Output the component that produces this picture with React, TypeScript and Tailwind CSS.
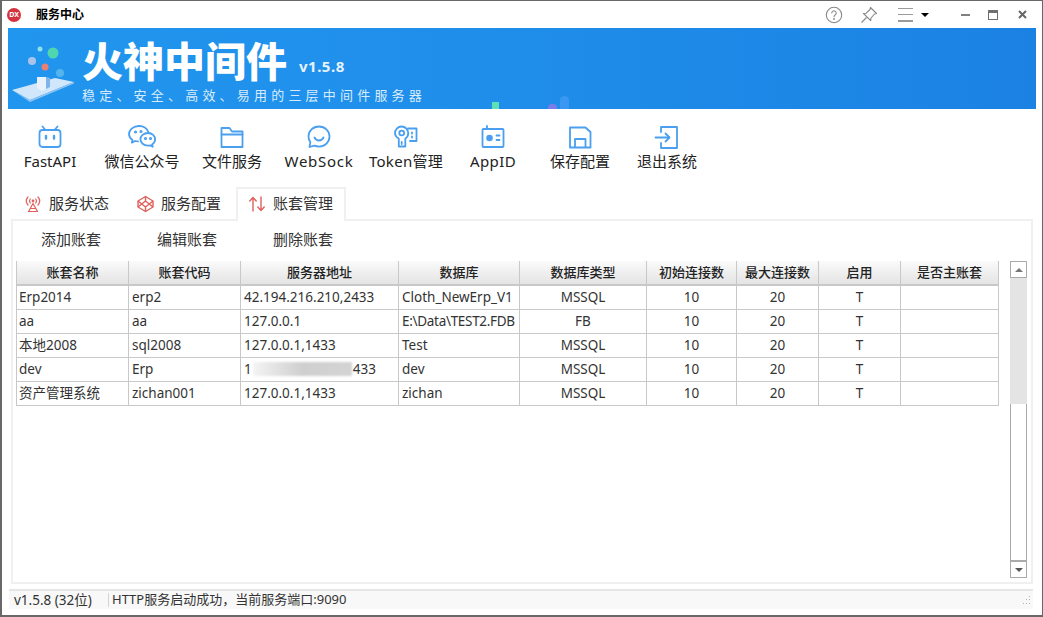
import type { ReactNode } from 'react';

const BLUE = '#4a9ff0';
const FONT = '"Noto Sans", "Noto Sans CJK SC", sans-serif';

function Ico({ children, w = 26, h = 26 }: { children: ReactNode; w?: number; h?: number }) {
  return (
    <svg width={w} height={h} viewBox={`0 0 ${w} ${h}`} fill="none" stroke={BLUE} strokeWidth="1.8" strokeLinejoin="round" strokeLinecap="round">
      {children}
    </svg>
  );
}

const toolbarItems: { label: string; cls: string; labelCls?: string; icon: ReactNode }[] = [
  {
    label: 'FastAPI',
    cls: 'w-[84px]',
    icon: (
      <Ico>
        <rect x="2.500" y="6" width="21" height="17" rx="3" />
        <path d="M8 5.500 5.500 2.500M18 5.500l2.500-3" />
        <path d="M9 12v2.500M17 12v2.500" strokeWidth="2.4" />
      </Ico>
    ),
  },
  {
    label: '微信公众号',
    cls: 'w-[100px]',
    icon: (
      <Ico w={30}>
        <path d="M12 2C6.500 2 2 5.600 2 10c0 2.500 1.400 4.500 3.500 6l-.7 2.700 3.200-1.700c1 .3 2 .4 3 .4" />
        <path d="M21.500 8.500C20.500 4.700 16.600 2 12 2" />
        <path d="M21 9c-4.300 0-7.600 2.800-7.600 6.300s3.300 6.300 7.600 6.300c.8 0 1.500-.1 2.200-.3l2.500 1.500-.6-2.400c1.800-1.200 3-3 3-5.100C28.100 11.800 25.200 9 21 9Z" />
        <circle cx="8.500" cy="8" r=".7" />
        <circle cx="14" cy="7.500" r=".7" />
        <circle cx="18.500" cy="14.500" r=".7" />
        <circle cx="23.500" cy="14.500" r=".7" />
      </Ico>
    ),
  },
  {
    label: '文件服务',
    cls: 'w-[80px]',
    icon: (
      <Ico>
        <path d="M2.500 4h8l2.500 3.500h10.500V23h-21Z" />
        <path d="M2.500 10.500h21" />
      </Ico>
    ),
  },
  {
    label: 'WebSock',
    cls: 'w-[94px]',
    labelCls: 'tracking-[0.7px]',
    icon: (
      <Ico>
        <path d="M13 2.500C7 2.500 2.500 7 2.500 12.500c0 2.200.7 4.100 1.900 5.700L3.500 23l5-1.300c1.400.6 2.900.9 4.500.9 5.800 0 10.500-4.500 10.500-10.100S18.800 2.500 13 2.500Z" />
        <path d="M8.500 13.500c1 2 2.700 3 4.500 3s3.500-1 4.500-3" />
      </Ico>
    ),
  },
  {
    label: 'Token管理',
    cls: 'w-[80px]',
    labelCls: 'tracking-[0.3px]',
    icon: (
      <Ico>
        <path d="M15 4.500h8.500V17H17" />
        <path d="M8.500 2.500a6.800 6.800 0 0 1 6.800 6.800c0 2.500-1.300 4.200-3 5.400V22.500H5.800v-7.800C3.800 13.500 2 11.800 2 9.300a6.500 6.500 0 0 1 6.500-6.800Z" />
        <circle cx="8.700" cy="9" r="2.400" />
        <path d="M8.700 18v2M19 8.500v1M19 12.500v1" />
      </Ico>
    ),
  },
  {
    label: 'AppID',
    cls: 'w-[94px]',
    labelCls: 'tracking-[0.4px]',
    icon: (
      <Ico>
        <rect x="2.500" y="5" width="21" height="18" rx="1" />
        <path d="M7 4.500V2" />
        <circle cx="9.500" cy="14" r="2.400" fill={BLUE} />
        <path d="M16.500 11.500h3M16.500 16h3" />
      </Ico>
    ),
  },
  {
    label: '保存配置',
    cls: 'w-[80px]',
    icon: (
      <Ico>
        <path d="M3 3.500h15.500L23.500 8v15.500H3Z" />
        <path d="M8 23v-8h10.500v8" />
      </Ico>
    ),
  },
  {
    label: '退出系统',
    cls: 'w-[94px]',
    icon: (
      <Ico>
        <path d="M7 8V3h16v21H7v-5" />
        <path d="M1.500 13.500H15" />
        <path d="m11.500 9.500 4 4-4 4" />
      </Ico>
    ),
  },
];

const columns = [
  { title: '账套名称', cls: 'w-[112px]', align: 'text-left' },
  { title: '账套代码', cls: 'w-[112px]', align: 'text-left' },
  { title: '服务器地址', cls: 'w-[158px]', align: 'text-left' },
  { title: '数据库', cls: 'w-[121px]', align: 'text-left' },
  { title: '数据库类型', cls: 'w-[127px]', align: 'text-center' },
  { title: '初始连接数', cls: 'w-[90px]', align: 'text-center' },
  { title: '最大连接数', cls: 'w-[82px]', align: 'text-center' },
  { title: '启用', cls: 'w-[82px]', align: 'text-center' },
  { title: '是否主账套', cls: 'w-[98px]', align: 'text-center' },
];

const rows: ReactNode[][] = [
  ['Erp2014', 'erp2', '42.194.216.210,2433', 'Cloth_NewErp_V1', 'MSSQL', '10', '20', 'T', ''],
  ['aa', 'aa', '127.0.0.1', <span className="tracking-[-0.3px]">E:\Data\TEST2.FDB</span>, 'FB', '10', '20', 'T', ''],
  ['本地2008', 'sql2008', '127.0.0.1,1433', 'Test', 'MSSQL', '10', '20', 'T', ''],
  [
    'dev',
    'Erp',
    <span className="flex items-center">
      1
      <span className="mx-px h-[14px] w-[99px] bg-gradient-to-r from-[#f4f4f4] via-[#cfcfcf] to-[#d4d4d4] blur-[1px]" />
      433
    </span>,
    'dev',
    'MSSQL',
    '10',
    '20',
    'T',
    '',
  ],
  ['资产管理系统', 'zichan001', '127.0.0.1,1433', 'zichan', 'MSSQL', '10', '20', 'T', ''],
];

function TabIcon({ name }: { name: string }) {
  if (name === 'status') {
    return (
      <svg width="16" height="18" viewBox="0 0 16 18" fill="none" stroke="#e0605c" strokeWidth="1.200" strokeLinecap="round" strokeLinejoin="round">
        <path d="M3 2C.8 4.500.8 7.500 3 10M13 2c2.200 2.500 2.200 5.500 0 8M5.300 4c-1 1.300-1 2.700 0 4M10.700 4c1 1.300 1 2.700 0 4" />
        <circle cx="8" cy="6" r=".8" fill="#e0605c" />
        <path d="M8 8.500 3.500 16.500h9Z M5.500 13.500h5" />
      </svg>
    );
  }
  if (name === 'config') {
    return (
      <svg width="17" height="18" viewBox="0 0 17 18" fill="none" stroke="#e0605c" strokeWidth="1.400" strokeLinejoin="round">
        <path d="M8.500 1.500 16 6v6l-7.500 4.500L1 12V6Z" />
        <path d="M8.500 1.500V6M8.500 12v4.500M1 6l7.500 6L16 6M1 12l7.500-6L16 12" />
      </svg>
    );
  }
  return (
    <svg width="16" height="16" viewBox="0 0 16 16" fill="none" stroke="#e0605c" strokeWidth="1.400" strokeLinecap="round" strokeLinejoin="round">
      <path d="M4 15V1.500M.8 5 4 1.500 7.200 5" />
      <path d="M12 1v13.500M8.800 11l3.200 3.500 3.200-3.500" />
    </svg>
  );
}

function ScrollButton({ up }: { up: boolean }) {
  return (
    <div className="flex h-[17px] items-center justify-center border border-[#aaaaaa] bg-white">
      <div
        className={
          up
            ? 'h-0 w-0 border-x-[4px] border-b-[4px] border-x-transparent border-b-[#777777]'
            : 'h-0 w-0 border-x-[4px] border-t-[4px] border-x-transparent border-t-[#555555]'
        }
      />
    </div>
  );
}

function Banner() {
  return (
    <div className="relative mx-[6px] flex h-[81px] shrink-0 overflow-hidden bg-gradient-to-r from-[#2196ee] via-[#1f8dea] to-[#1b82e3]">
      <svg width="70" height="81" viewBox="0 0 70 81" className="ml-[4px] shrink-0">
        <path d="M0 62 43 50 62 54 18 72Z" fill="#cfe6fb" />
        <path d="M0 62 18 72 62 54 62 55.500 18 74Z" fill="#8fc4f4" />
        <path d="M25 49h9v12l-4 2-5-3Z" fill="#e8f2fc" />
        <path d="M34 49l4 1v9l-4 2Z" fill="#7fb4ea" />
        <circle cx="20" cy="33" r="4" fill="#a9c4ea" />
        <circle cx="28" cy="21" r="2.500" fill="#8fe0e8" />
        <circle cx="41" cy="25" r="5.500" fill="#4fd6b0" />
        <circle cx="33" cy="39" r="3.500" fill="#ea7f73" />
        <circle cx="48" cy="45" r="4" fill="#54b4ec" />
      </svg>
      <div className="flex flex-col pt-[10px]" style={{ fontFamily: FONT }}>
        <div className="flex items-end gap-[12px]">
          <span className="text-[41px] leading-[46px] font-black text-white">火神中间件</span>
          <span className="pb-[8px] text-[15px] leading-5 font-bold tracking-[0.5px] text-[#e6f2fd]">v1.5.8</span>
        </div>
        <span className="mt-[2px] text-[13px] leading-[18px] tracking-[4.200px] text-[#d9ecfc]">稳定、安全、高效、易用的三层中间件服务器</span>
      </div>
      <div className="absolute top-[74px] left-[484px] h-[7px] w-[7px] bg-[#5fe0b4]" />
      <div className="absolute top-[76px] left-[540px] h-[8px] w-[9px] rounded-full bg-[#7a7ce8]" />
      <div className="absolute top-[68px] left-[552px] h-[16px] w-[9px] rounded-full bg-[#3a98f2]" />
    </div>
  );
}

export default function App() {
  return (
    <div
      className="flex h-[617px] w-[1043px] flex-col overflow-hidden border-t border-r border-b-2 border-l-2 border-[#686868] bg-white text-[#222222]"
      style={{ fontFamily: FONT }}
    >
      {/* Title bar */}
      <div className="flex h-[27px] shrink-0 items-center">
        <div className="ml-[5px] flex h-[14px] w-[14px] items-center justify-center rounded-full bg-[#d2333f]">
          <span className="text-[7px] leading-none font-bold text-white">DX</span>
        </div>
        <span className="ml-[15px] text-[12px] font-bold text-black">服务中心</span>
        <div className="ml-auto flex items-center">
          <svg width="18" height="18" viewBox="0 0 18 18" fill="none" stroke="#888888" strokeWidth="1.100" strokeLinecap="round">
            <circle cx="9" cy="9" r="7.700" />
            <path d="M6.800 7a2.200 2.200 0 1 1 3.400 1.900c-.8.500-1.200 1-1.200 1.800" />
            <circle cx="9" cy="13" r=".4" />
          </svg>
          <svg className="ml-[17px]" width="18" height="18" viewBox="0 0 18 18" fill="none" stroke="#888888" strokeWidth="1.100" strokeLinejoin="round">
            <path d="M10.500 1.500 16.500 7.500 14.500 8 11 12l-.3 2.700L3.500 7.500 6.200 7.200 10 3.500Z" />
            <path d="M6.500 11.500 1.500 16.500" />
          </svg>
          <div className="ml-[20px] flex h-[14px] w-[15px] flex-col justify-between">
            <div className="h-[1.500px] bg-[#9a9a9a]" />
            <div className="h-[1.500px] bg-[#9a9a9a]" />
            <div className="h-[1.500px] bg-[#9a9a9a]" />
          </div>
          <div className="ml-[8px] h-0 w-0 border-x-[4px] border-t-[4px] border-x-transparent border-t-black" />
          <div className="ml-[32px] h-[2px] w-[9px] bg-[#808080]" />
          <div className="ml-[18px] h-[10px] w-[10px] border border-t-[3px] border-[#707070]" />
          <svg className="mr-[15px] ml-[20px]" width="9" height="9" viewBox="0 0 9 9" stroke="#666666" strokeWidth="2">
            <path d="M1 1l7 7M8 1 1 8" />
          </svg>
        </div>
      </div>

      <Banner />

      {/* Toolbar */}
      <div className="flex h-[78px] shrink-0 pt-[15px] pl-[6px]">
        {toolbarItems.map((item) => (
          <div key={item.label} className={`flex flex-col items-center ${item.cls}`}>
            <div className="flex h-[26px] items-center">{item.icon}</div>
            <span className={`text-[15px] leading-[22px] whitespace-nowrap text-[#222222] ${item.labelCls ?? ''}`}>{item.label}</span>
          </div>
        ))}
      </div>

      {/* Tabs */}
      <div className="flex h-[32px] shrink-0 pl-[23px] text-[15px] text-[#333333]">
        <div className="flex w-[112px] items-center gap-[8px] pt-[1px]">
          <TabIcon name="status" />
          <span>服务状态</span>
        </div>
        <div className="flex w-[99px] items-center gap-[7px] pt-[1px]">
          <TabIcon name="config" />
          <span>服务配置</span>
        </div>
        <div className="z-10 -mb-[2px] flex h-[34px] w-[110px] items-center gap-[8px] border-x-2 border-t-2 border-[#f0f0f0] bg-white pb-[3px] pl-[11px]">
          <TabIcon name="arrows" />
          <span>账套管理</span>
        </div>
      </div>

      {/* Panel */}
      <div className="mr-[9px] ml-[9px] flex h-[365px] shrink-0 flex-col border-2 border-[#f0f0f0] px-[3px]">
        <div className="flex h-[40px] shrink-0 items-center pb-[4px] pl-[25px] text-[15px] text-[#333333]">
          <span className="w-[116px]">添加账套</span>
          <span className="w-[116px]">编辑账套</span>
          <span>删除账套</span>
        </div>
        <div className="flex">
          <table className="w-[983px] table-fixed border-collapse self-start text-[13.500px] text-[#333333]">
            <thead>
              <tr className="h-[24px]">
                {columns.map((c) => (
                  <th
                    key={c.title}
                    className={`${c.cls} border-x border-b-2 border-[#c8c8c8] bg-gradient-to-b from-[#fafafa] to-[#e4e4e4] p-0 text-center text-[13px] font-medium text-[#222222]`}
                  >
                    {c.title}
                  </th>
                ))}
              </tr>
            </thead>
            <tbody>
              {rows.map((row, i) => (
                <tr key={i} className="h-[24px]">
                  {row.map((cell, j) => (
                    <td
                      key={j}
                      className={`${columns[j].align} border border-[#c8c8c8] py-0 whitespace-nowrap ${j === 0 ? 'pr-[3px] pl-[2px]' : 'px-[3px]'}`}
                    >
                      {cell}
                    </td>
                  ))}
                </tr>
              ))}
            </tbody>
          </table>
          <div className="ml-[11px] flex h-[317px] w-[17px] flex-col">
            <ScrollButton up />
            <div className="h-[126px] bg-[#e4e4e4]" />
            <div className="flex-1 border-x border-[#aaaaaa] bg-white" />
            <div className="border-t border-[#aaaaaa]" />
            <ScrollButton up={false} />
          </div>
        </div>
      </div>

      {/* Status bar */}
      <div className="mt-[5px] mr-[9px] ml-[7px] flex h-[20px] shrink-0 items-center border-t-2 border-[#e6e6e6] bg-[#f8f8f8] text-[13.500px] text-[#333333]">
        <span className="w-[99px] pl-[5px]">v1.5.8 (32位)</span>
        <div className="h-[14px] w-px bg-[#d4d4d4]" />
        <span className="pl-[3px] text-[13px]">HTTP服务启动成功，当前服务端口:9090</span>
        <svg className="mr-[2px] ml-auto" width="9" height="9" viewBox="0 0 9 9" fill="#b4b4b4">
          <rect x="7" y="0" width="1" height="1" />
          <rect x="4" y="3" width="1" height="1" />
          <rect x="7" y="3" width="1" height="1" />
          <rect x="1" y="7" width="1" height="1" />
          <rect x="4" y="7" width="1" height="1" />
          <rect x="7" y="7" width="1" height="1" />
        </svg>
      </div>
    </div>
  );
}
